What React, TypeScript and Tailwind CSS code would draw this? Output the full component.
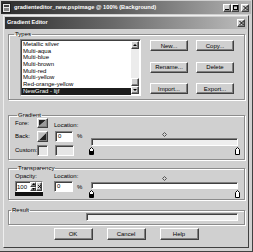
import type { JSX } from 'react';

// grayscale win2000 palette
const raised = 'border border-t-white border-l-white border-r-[#404040] border-b-[#404040] shadow-[inset_-1px_-1px_0_#808080] bg-[#d0d0d0]';
const sunken = 'border border-t-[#808080] border-l-[#808080] border-r-white border-b-white shadow-[inset_1px_1px_0_#404040]';
const group = 'border border-[#8c8c8c] shadow-[1px_1px_0_#fff,inset_1px_1px_0_#fff] rounded-none';

const gradients = [
    'Metallic silver',
    'Multi-aqua',
    'Multi-blue',
    'Multi-brown',
    'Multi-red',
    'Multi-yellow',
    'Red-orange-yellow',
    'NewGrad - lijf',
];

function Button({ label, w = 'w-[38px]', h = 'h-[11px]' }: { label: string; w?: string; h?: string }): JSX.Element {
    return (
        <div className={`${raised} ${w} ${h} flex items-center justify-center leading-none`}>
            {label}
        </div>
    );
}

function Stop({ dark }: { dark: boolean }): JSX.Element {
    return (
        <svg width="5" height="8" viewBox="0 0 5 8">
            <path d="M2.5 0.5 L4.5 2.5 L4.5 7.5 L0.5 7.5 L0.5 2.5 Z" fill="#fff" stroke="#000" strokeWidth="1" />
            {dark && <rect x="1" y="4" width="3" height="3" fill="#000" />}
        </svg>
    );
}

function Diamond(): JSX.Element {
    return (
        <svg width="5" height="5" viewBox="0 0 5 5">
            <path d="M2.5 0.5 L4.5 2.5 L2.5 4.5 L0.5 2.5 Z" fill="#d0d0d0" stroke="#555" strokeWidth="1" />
        </svg>
    );
}

function TitleBtn({ children }: { children: JSX.Element }): JSX.Element {
    return (
        <div className={`${raised} w-[8px] h-[8px] flex items-center justify-center`}>{children}</div>
    );
}

function Cross(): JSX.Element {
    return (
        <svg width="5" height="4" viewBox="0 0 5 4">
            <path d="M0.5 0 L4.5 4 M4.5 0 L0.5 4" stroke="#000" strokeWidth="1" />
        </svg>
    );
}

export default function App(): JSX.Element {
    return (
        <div className="w-[253px] h-[252px] bg-[#d0d0d0] p-[1px] flex flex-col overflow-hidden text-black text-[6px] font-['Liberation_Sans',Arial,sans-serif] border-r border-b border-[#404040]">
            {/* document window title bar */}
            <div className="h-[13px] flex items-center pl-[1px] pr-[2px] bg-[linear-gradient(90deg,#2e2e2e,#5a5a5a_45%,#b4b4b4)]">
                <svg width="9" height="10" viewBox="0 0 9 10" className="shrink-0">
                    <rect x="0.5" y="0.5" width="8" height="9" fill="#e8e8e8" stroke="#222" />
                    <rect x="2" y="2" width="5" height="2" fill="#444" />
                    <rect x="2" y="5" width="5" height="3" fill="#888" />
                </svg>
                <span className="ml-[3px] text-white font-bold text-[5.7px] leading-none whitespace-nowrap">
                    gradienteditor_new.pspimage @ 100% (Background)
                </span>
                <div className="ml-auto flex items-center">
                    <TitleBtn>
                        <svg width="4" height="4" viewBox="0 0 4 4"><rect x="0" y="3" width="4" height="1" fill="#000" /></svg>
                    </TitleBtn>
                    <TitleBtn>
                        <svg width="5" height="5" viewBox="0 0 5 5"><rect x="0.5" y="0.5" width="4" height="4" fill="none" stroke="#000" /><rect x="0" y="0" width="5" height="1.5" fill="#000" /></svg>
                    </TitleBtn>
                    <div className="ml-[2px]">
                        <TitleBtn><Cross /></TitleBtn>
                    </div>
                </div>
            </div>

            {/* dialog */}
            <div className="mt-[1px] ml-[2px] mr-[2px] h-[233px] border border-t-[#efefef] border-l-[#efefef] border-r-[#404040] border-b-[#404040] p-[1px] flex flex-col">
                <div className="h-[12px] flex items-center pl-[2px] pr-[2px] bg-[linear-gradient(90deg,#303030,#6a6a6a_45%,#bcbcbc)]">
                    <span className="text-white font-bold text-[5.6px] leading-none">Gradient Editor</span>
                    <div className="ml-auto">
                        <TitleBtn><Cross /></TitleBtn>
                    </div>
                </div>

                {/* Types */}
                <fieldset className={`${group} mt-[2px] ml-[3px] mr-[2px] h-[69px] pl-[11px] pt-[1px]`}>
                    <legend className="-ml-[6px] px-[1px] leading-[7px]">Types</legend>
                    <div className="flex">
                        <div className={`${sunken} bg-white w-[121px] h-[57px] flex p-[1px]`}>
                            <div className="flex-1 flex flex-col leading-[6.7px] whitespace-nowrap">
                                {gradients.map((g, i) => (
                                    <div
                                        key={g}
                                        className={`h-[6.7px] pl-[1px] ${i === gradients.length - 1 ? 'bg-[#1c1c1c] text-white' : ''}`}
                                    >
                                        {g}
                                    </div>
                                ))}
                            </div>
                            {/* scrollbar */}
                            <div className="w-[8px] flex flex-col bg-[#ececec]">
                                <div className={`${raised} h-[8px] flex items-center justify-center`}>
                                    <svg width="4" height="2" viewBox="0 0 4 2"><path d="M2 0 L4 2 L0 2 Z" fill="#000" /></svg>
                                </div>
                                <div className="flex-1" />
                                <div className={`${raised} h-[8px]`} />
                                <div className={`${raised} h-[8px] flex items-center justify-center`}>
                                    <svg width="4" height="2" viewBox="0 0 4 2"><path d="M0 0 L4 0 L2 2 Z" fill="#000" /></svg>
                                </div>
                            </div>
                        </div>
                        <div className="ml-[9px] mt-[1px] grid grid-cols-[38px_38px] gap-x-[8px] gap-y-[10.5px] content-start">
                            <Button label="New..." />
                            <Button label="Copy..." />
                            <Button label="Rename..." />
                            <Button label="Delete" />
                            <Button label="Import..." />
                            <Button label="Export..." />
                        </div>
                    </div>
                </fieldset>

                {/* Gradient */}
                <fieldset className={`${group} mt-[12px] ml-[3px] mr-[2px] h-[48px] pl-[6px] pr-[6px]`}>
                    <legend className="ml-[2px] px-[1px] leading-[6px]">Gradient</legend>
                    <div className="flex">
                        <div className="flex flex-col gap-[3px] w-[71px]">
                            <div className="h-[10px] flex">
                                <span className="w-[22px] self-center">Fore:</span>
                                <div className={`${raised} w-[11px] h-[10px] flex items-center justify-center`}>
                                    <svg width="7" height="6" viewBox="0 0 7 6"><path d="M0 0 H7 L0 6 Z" fill="#222" /><path d="M7 0 V6 H0 Z" fill="#9a9a9a" /></svg>
                                </div>
                                <span className="ml-[6px] self-end leading-none">Location:</span>
                            </div>
                            <div className="h-[11px] flex items-center">
                                <span className="w-[22px]">Back:</span>
                                <div className={`${raised} w-[11px] h-[11px] flex items-center justify-center`}>
                                    <svg width="7" height="7" viewBox="0 0 7 7"><path d="M7 0 V7 H0 Z" fill="#222" /><path d="M0 0 H7 L0 7 Z" fill="#bdbdbd" /></svg>
                                </div>
                                <div className={`${sunken} bg-white ml-[7px] w-[18px] h-[11px] pl-[2px] leading-[9px]`}>0</div>
                                <span className="ml-[4px]">%</span>
                            </div>
                            <div className="h-[11px] flex items-center">
                                <span className="w-[22px]">Custom:</span>
                                <div className={`${sunken} bg-[#e6e6e6] w-[11px] h-[11px]`} />
                                <div className={`${sunken} bg-[#e6e6e6] ml-[7px] w-[19px] h-[11px]`} />
                            </div>
                        </div>
                        <div className="flex-1 ml-[5px] flex flex-col justify-end pb-[1px]">
                            <div className="flex justify-center"><Diamond /></div>
                            <div className={`${sunken} bg-[#eeeeee] h-[8px] mt-[1px]`} />
                            <div className="flex justify-between mt-[1px] -mx-[2px]">
                                <Stop dark />
                                <Stop dark={false} />
                            </div>
                        </div>
                    </div>
                </fieldset>

                {/* Transparency */}
                <fieldset className={`${group} mt-[5px] ml-[3px] mr-[2px] h-[35px] pl-[6px] pr-[6px]`}>
                    <legend className="ml-[2px] px-[1px] leading-[6px]">Transparency</legend>
                    <div className="flex">
                        <div className="flex flex-col w-[71px]">
                            <div className="flex leading-none mt-[2px]">
                                <span className="w-[39px]">Opacity:</span>
                                <span>Location:</span>
                            </div>
                            <div className="flex items-start mt-[2px]">
                                <div className="flex flex-col w-[28px]">
                                    <div className={`${sunken} bg-white h-[11px] flex items-center`}>
                                        <span className="pl-[1px] flex-1 leading-none">100</span>
                                        <div className="flex flex-col w-[6px] h-[9px]">
                                            <div className={`${raised} flex-1 flex items-center justify-center`}>
                                                <svg width="3" height="2" viewBox="0 0 3 2"><path d="M1.5 0 L3 2 L0 2 Z" fill="#000" /></svg>
                                            </div>
                                            <div className={`${raised} flex-1 flex items-center justify-center`}>
                                                <svg width="3" height="2" viewBox="0 0 3 2"><path d="M0 0 L3 0 L1.5 2 Z" fill="#000" /></svg>
                                            </div>
                                        </div>
                                        <div className={`${raised} w-[6px] h-[9px] flex items-center justify-center`}>
                                            <svg width="3" height="3" viewBox="0 0 3 3"><path d="M0 0 L3 3 M3 0 L0 3" stroke="#000" strokeWidth="0.8" /></svg>
                                        </div>
                                    </div>
                                    <div className="h-[4px] bg-[#111]" />
                                </div>
                                <div className={`${sunken} bg-white ml-[11px] w-[19px] h-[11px] pl-[2px] leading-[9px]`}>0</div>
                                <span className="ml-[4px] mt-[3px] leading-none">%</span>
                            </div>
                        </div>
                        <div className="flex-1 ml-[5px] flex flex-col pt-[5px]">
                            <div className="flex justify-center"><Diamond /></div>
                            <div className={`${sunken} bg-white h-[7px] mt-[1px]`} />
                            <div className="flex justify-between mt-[1px] -mx-[2px]">
                                <Stop dark />
                                <Stop dark={false} />
                            </div>
                        </div>
                    </div>
                </fieldset>

                {/* Result */}
                <fieldset className={`${group} mt-[7px] ml-[3px] mr-[2px] h-[18px] pl-[77px] pr-[6px]`}>
                    <legend className="-ml-[75px] px-[1px] leading-[6px]">Result</legend>
                    <div className={`${sunken} bg-[#eeeeee] h-[8px]`} />
                </fieldset>

                <div className="mt-[3px] flex justify-center gap-[14px]">
                    <Button label="OK" w="w-[39px]" h="h-[12px]" />
                    <Button label="Cancel" w="w-[39px]" h="h-[12px]" />
                    <Button label="Help" w="w-[39px]" h="h-[12px]" />
                </div>
            </div>
        </div>
    );
}
